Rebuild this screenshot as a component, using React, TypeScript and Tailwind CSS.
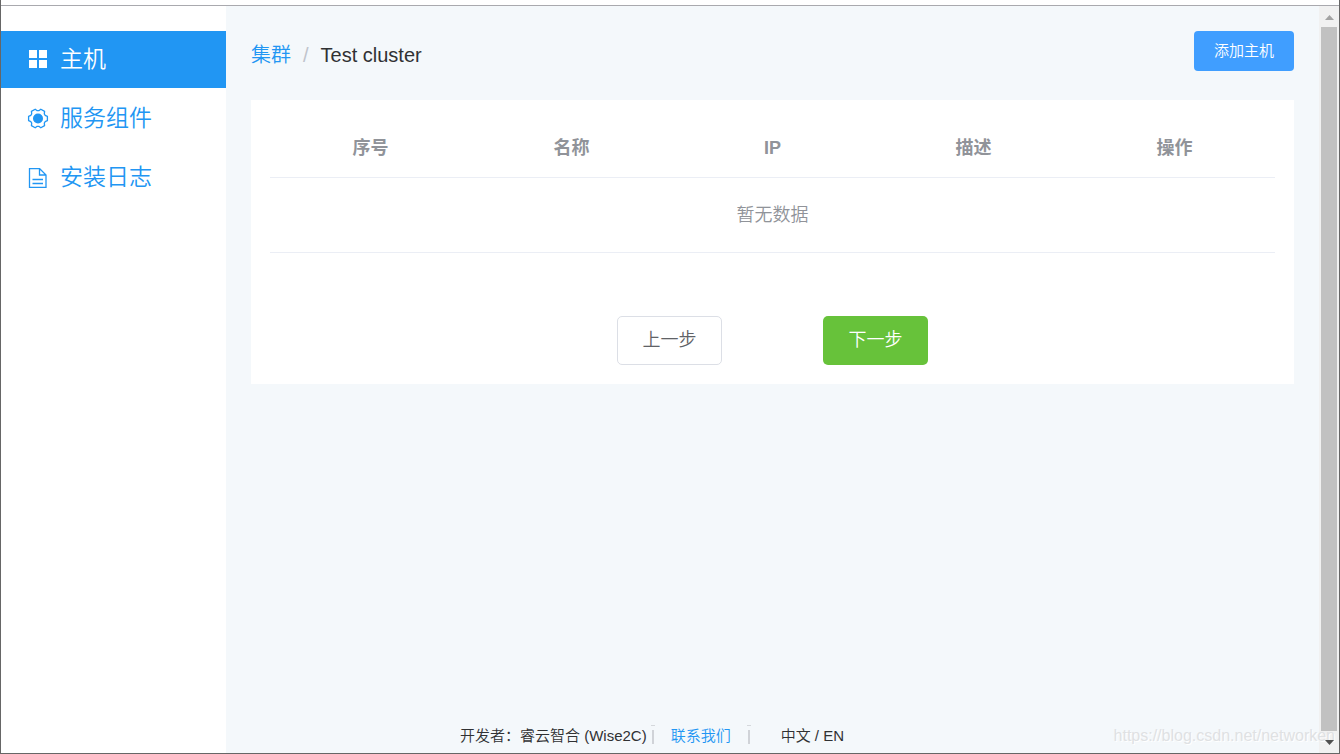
import type { ReactNode } from 'react';

interface MenuItem {
  label: string;
  icon: ReactNode;
  active?: boolean;
}

const columns = ['序号', '名称', 'IP', '描述', '操作'];

function GridIcon() {
  return (
    <svg className="w-5 h-5" viewBox="0 0 20 20" fill="currentColor" aria-hidden="true">
      <path d="M1 0h8v8H1zM11 0h8v8h-8zM1 10h8v8H1zM11 10h8v8h-8z" />
    </svg>
  );
}

function SettingIcon() {
  return (
    <svg className="w-5 h-5 overflow-visible" viewBox="0 0 20 20" fill="none" stroke="currentColor" strokeWidth="1.3" aria-hidden="true">
      <path
        strokeLinejoin="round"
        d="M17.1 6.3L19.4 7.3V11.7L17.1 12.7L16.3 14.1L16.6 16.6L12.8 18.8L10.8 17.3H9.2L7.2 18.8L3.4 16.6L3.7 14.1L2.9 12.7L.6 11.7V7.3L2.9 6.3L3.7 4.9L3.4 2.4L7.2 .2L9.2 1.7H10.8L12.8 .2L16.6 2.4L16.3 4.9z"
      />
      <circle cx="10" cy="9.5" r="5" fill="currentColor" stroke="none" />
    </svg>
  );
}

function DocumentIcon() {
  return (
    <svg className="w-5 h-5" viewBox="0 0 20 20" fill="none" stroke="currentColor" strokeWidth="1.3" aria-hidden="true">
      <path d="M1.500.5h10l6.500 6.500v12.500H1.500zM11.500.5V7H18" />
      <path d="M4.500 11.500H15M4.500 15.500H15" />
    </svg>
  );
}

const menu: MenuItem[] = [
  { label: '主机', icon: <GridIcon />, active: true },
  { label: '服务组件', icon: <SettingIcon /> },
  { label: '安装日志', icon: <DocumentIcon /> },
];

function Sidebar() {
  return (
    <nav className="w-[225px] shrink-0 bg-white pt-[25px] flex flex-col gap-[2px]">
      {menu.map((item) => (
        <a
          key={item.label}
          href="#"
          className={
            item.active
              ? 'h-[57px] pl-[27px] flex items-center gap-3 text-[23px] bg-[#2196f3] text-white'
              : 'h-[57px] pl-[27px] flex items-center gap-3 text-[23px] text-[#2196f3]'
          }
        >
          {item.icon}
          <span>{item.label}</span>
        </a>
      ))}
    </nav>
  );
}

function HostTable() {
  return (
    <table className="w-full table-fixed text-[18px] text-center text-[#909399]">
      <thead>
        <tr className="h-[58px] border-b border-[#ebeef5]">
          {columns.map((name) => (
            <th key={name} className="pt-[2px] font-bold">{name}</th>
          ))}
        </tr>
      </thead>
      <tbody>
        <tr className="h-[75px] border-b border-[#ebeef5]">
          <td colSpan={5} className="pt-[2px]">暂无数据</td>
        </tr>
      </tbody>
    </table>
  );
}

function Divider() {
  return (
    <span className="w-1 h-[22px] flex flex-col items-center gap-1" aria-hidden="true">
      <span className="w-1 h-px bg-[#d5d8dc]" />
      <span className="w-[2px] h-[14px] bg-[#d0d3d8]" />
    </span>
  );
}

function Footer() {
  return (
    <footer className="mt-auto pl-[209px] pb-[6px] flex items-center text-[15px] leading-[22px]">
      <span className="mr-1">开发者：睿云智合 (Wise2C)</span>
      <Divider />
      <a href="#" className="mx-4 text-[#2196f3]">联系我们</a>
      <Divider />
      <button type="button" className="ml-[30px]">中文 / EN</button>
    </footer>
  );
}

// Page scrollbar with its two arrow buttons
function Scrollbar() {
  return (
    <div className="w-5 shrink-0 bg-[#f1f1f1] px-[2px] flex flex-col items-center">
      <svg className="w-[17px] h-[21px] shrink-0" viewBox="0 0 17 21" fill="#a3a3a3" aria-hidden="true">
        <path d="M4 14h9L8.500 9z" />
      </svg>
      <div className="w-full flex-1 bg-[#c1c1c1]" />
      <svg className="relative z-10 w-[17px] h-[22px] shrink-0" viewBox="0 0 17 22" fill="#505050" aria-hidden="true">
        <path d="M4 9h9l-4.500 5z" />
      </svg>
    </div>
  );
}

export default function App() {
  return (
    <div className="relative min-h-screen flex flex-col bg-white border-x border-b border-[#666666] text-[#303133] font-[350] font-['Liberation_Sans','Noto_Sans_CJK_SC',sans-serif]">
      <div className="h-[6px] border-b border-[#a9a9ae]" />
      <div className="flex-1 flex">
        <Sidebar />

        <main className="flex-1 min-w-0 bg-[#f4f8fb] px-[25px] pt-[25px] flex flex-col">
          <div className="flex justify-between items-start">
            <div className="h-12 flex items-center text-[20px]">
              <a href="#" className="text-[#2196f3]">集群</a>
              <span className="mx-3 text-[#c0c4cc]">/</span>
              <span>Test cluster</span>
            </div>
            <button type="button" className="w-[100px] h-10 rounded-[4px] bg-[#409eff] text-white text-[15px]">
              添加主机
            </button>
          </div>

          <section className="mt-[21px] bg-white p-[19px]">
            <HostTable />
            <div className="mt-[63px] flex justify-center gap-[101px] text-[18px]">
              <button type="button" className="w-[105px] h-[49px] rounded-[5px] border border-[#dcdfe6] bg-white text-[#606266]">
                上一步
              </button>
              <button type="button" className="w-[105px] h-[49px] rounded-[5px] bg-[#67c23a] text-white">
                下一步
              </button>
            </div>
          </section>

          <Footer />
        </main>

        <Scrollbar />
      </div>

      <span className="absolute right-1 bottom-[5px] text-[16px] leading-6 text-[#dfe1e3] [text-shadow:1px_1px_0_#ffffff] pointer-events-none">
        https://blog.csdn.net/networken
      </span>
    </div>
  );
}
